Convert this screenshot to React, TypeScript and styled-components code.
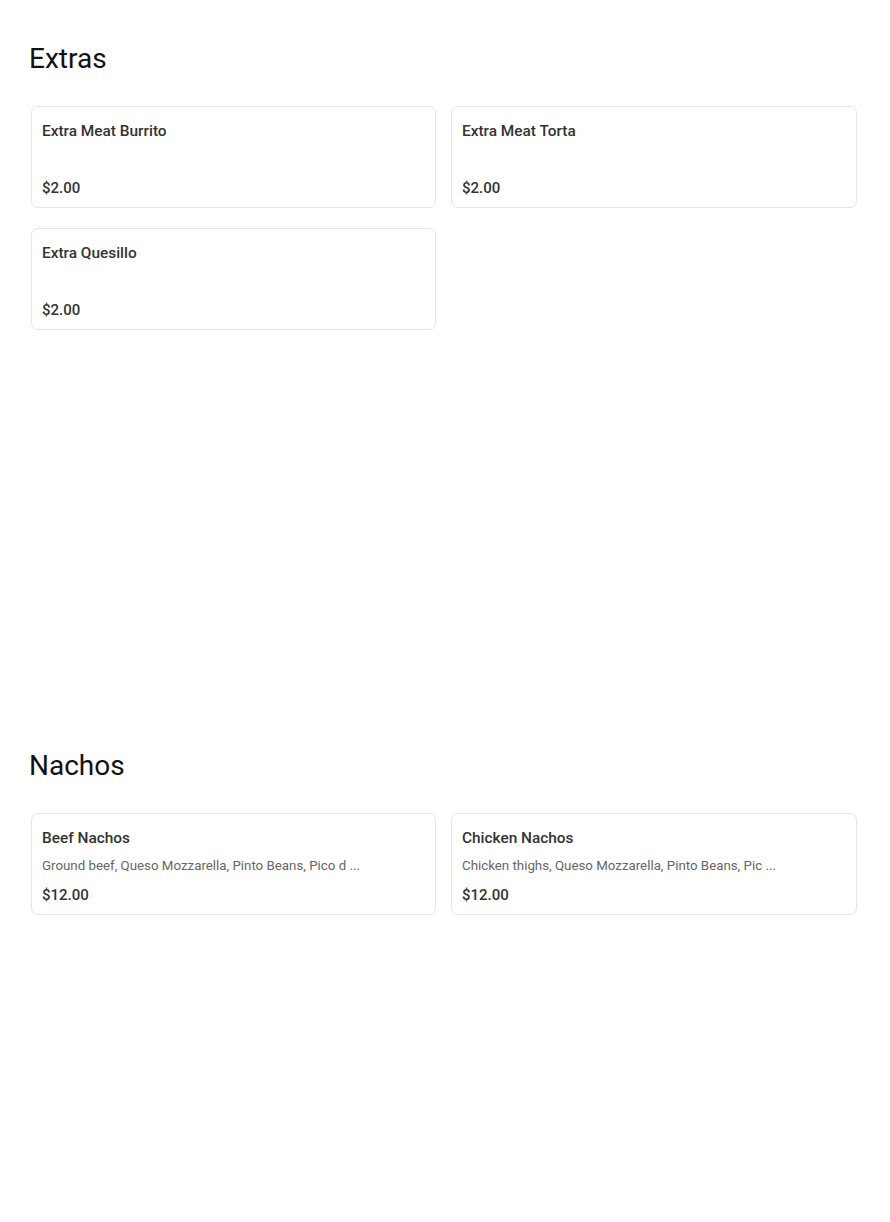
import React from 'react';
import styled, { createGlobalStyle } from 'styled-components';

type Item = {
  name: string;
  description?: string;
  price: string;
};

type Category = {
  title: string;
  items: Item[];
};

const menu: Category[] = [
  {
    title: 'Extras',
    items: [
      { name: 'Extra Meat Burrito', price: '$2.00' },
      { name: 'Extra Meat Torta', price: '$2.00' },
      { name: 'Extra Quesillo', price: '$2.00' },
    ],
  },
  {
    title: 'Nachos',
    items: [
      {
        name: 'Beef Nachos',
        description: 'Ground beef, Queso Mozzarella, Pinto Beans, Pico d ...',
        price: '$12.00',
      },
      {
        name: 'Chicken Nachos',
        description: 'Chicken thighs, Queso Mozzarella, Pinto Beans, Pic ...',
        price: '$12.00',
      },
    ],
  },
];

const GlobalStyle = createGlobalStyle`
  body {
    margin: 0;
    background: #fff;
    font-family: Roboto, 'Liberation Sans', sans-serif;
  }
`;

const Page = styled.main`
  padding: 41px 0 0 31px;
`;

const Section = styled.section`
  min-height: 707px;

  &:last-child {
    min-height: 0;
  }
`;

const Heading = styled.h2`
  margin: 0 0 29px -2px;
  font-size: 28px;
  line-height: 36px;
  font-weight: 400;
  color: #111;
`;

const Grid = styled.div`
  display: grid;
  grid-template-columns: 405px 406px;
  column-gap: 15px;
  row-gap: 20px;
`;

const Card = styled.div`
  display: flex;
  flex-direction: column;
  padding: 14px 10px 9px;
  border: 1px solid #e6e6e6;
  border-radius: 7px;
  background: #fff;
  box-shadow: 0 0 1px rgba(0, 0, 0, 0.04);
`;

const Name = styled.div`
  font-size: 15.4px;
  line-height: 20px;
  font-weight: 500;
  color: #333;
`;

const Description = styled.div`
  margin-top: 8px;
  min-height: 20px;
  font-size: 13.3px;
  line-height: 20px;
  color: #666;
  white-space: nowrap;
  overflow: hidden;
`;

const Price = styled.div`
  margin-top: 9px;
  font-size: 15px;
  line-height: 20px;
  font-weight: 500;
  color: #333;
`;

const App = () => {
  return (
    <>
      <GlobalStyle />
      <Page>
        {menu.map((category) => (
          <Section key={category.title}>
            <Heading>{category.title}</Heading>
            <Grid>
              {category.items.map((item) => (
                <Card key={item.name}>
                  <Name>{item.name}</Name>
                  <Description>{item.description}</Description>
                  <Price>{item.price}</Price>
                </Card>
              ))}
            </Grid>
          </Section>
        ))}
      </Page>
    </>
  );
};

export default App;
